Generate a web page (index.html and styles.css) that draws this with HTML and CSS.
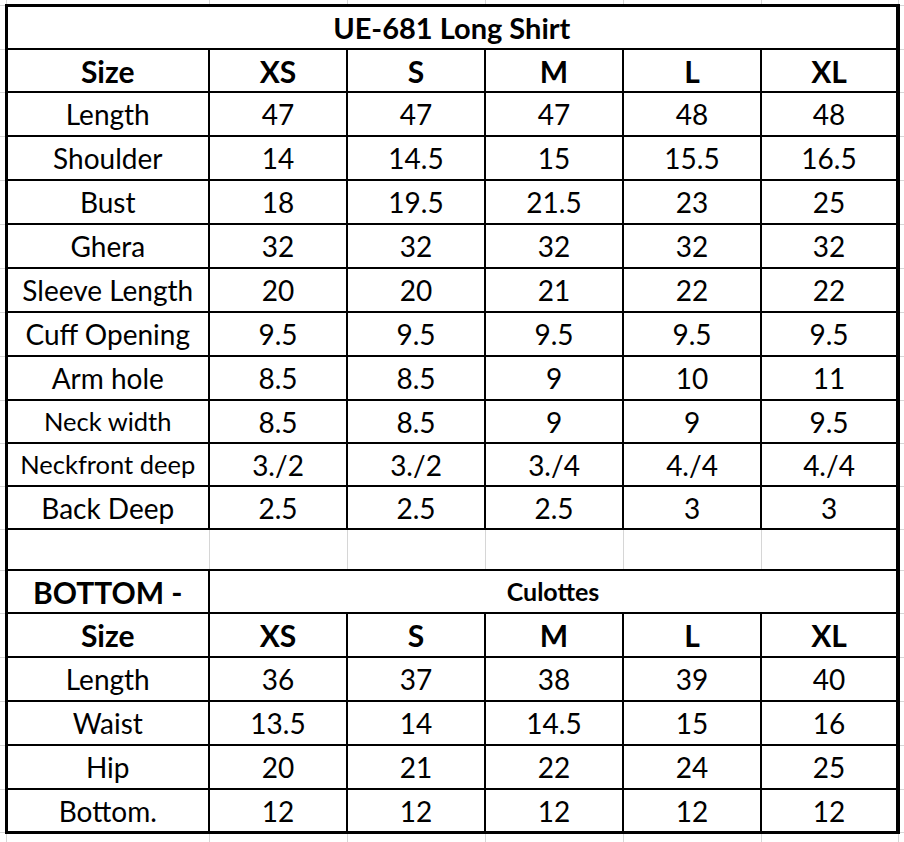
FILE: index.html
```html
<!DOCTYPE html>
<html lang="en">
<head>
<meta charset="utf-8">
<title>UE-681 Long Shirt – Size Chart</title>
<link rel="stylesheet" href="styles.css">
</head>
<body>
<table class="sheet">
  <colgroup>
    <col class="c-gut-l">
    <col class="c-label">
    <col class="c-val"><col class="c-val"><col class="c-val"><col class="c-val">
    <col class="c-val-last">
    <col class="c-gut-r">
  </colgroup>
  <tr class="gut-top">
    <td class="corner"></td><td></td><td></td><td></td><td></td><td></td><td></td><td class="corner"></td>
  </tr>
  <tr class="r-title">
    <td class="gl"></td><td class="title first last" colspan="6">UE-681 Long Shirt</td><td class="gr"></td>
  </tr>
  <tr class="r-43 head">
    <td class="gl"></td><td class="first">Size</td><td>XS</td><td>S</td><td>M</td><td>L</td><td class="last">XL</td><td class="gr"></td>
  </tr>
  <tr class="r-44">
    <td class="gl"></td><td class="first">Length</td><td>47</td><td>47</td><td>47</td><td>48</td><td class="last">48</td><td class="gr"></td>
  </tr>
  <tr class="r-44">
    <td class="gl"></td><td class="first">Shoulder</td><td>14</td><td>14.5</td><td>15</td><td>15.5</td><td class="last">16.5</td><td class="gr"></td>
  </tr>
  <tr class="r-44">
    <td class="gl"></td><td class="first">Bust</td><td>18</td><td>19.5</td><td>21.5</td><td>23</td><td class="last">25</td><td class="gr"></td>
  </tr>
  <tr class="r-44">
    <td class="gl"></td><td class="first">Ghera</td><td>32</td><td>32</td><td>32</td><td>32</td><td class="last">32</td><td class="gr"></td>
  </tr>
  <tr class="r-44">
    <td class="gl"></td><td class="first">Sleeve Length</td><td>20</td><td>20</td><td>21</td><td>22</td><td class="last">22</td><td class="gr"></td>
  </tr>
  <tr class="r-44">
    <td class="gl"></td><td class="first">Cuff Opening</td><td>9.5</td><td>9.5</td><td>9.5</td><td>9.5</td><td class="last">9.5</td><td class="gr"></td>
  </tr>
  <tr class="r-44">
    <td class="gl"></td><td class="first">Arm hole</td><td>8.5</td><td>8.5</td><td>9</td><td>10</td><td class="last">11</td><td class="gr"></td>
  </tr>
  <tr class="r-43">
    <td class="gl"></td><td class="first small">Neck width</td><td>8.5</td><td>8.5</td><td>9</td><td>9</td><td class="last">9.5</td><td class="gr"></td>
  </tr>
  <tr class="r-43">
    <td class="gl"></td><td class="first small">Neckfront deep</td><td>3./2</td><td>3./2</td><td>3./4</td><td>4./4</td><td class="last">4./4</td><td class="gr"></td>
  </tr>
  <tr class="r-43">
    <td class="gl"></td><td class="first">Back Deep</td><td>2.5</td><td>2.5</td><td>2.5</td><td>3</td><td class="last">3</td><td class="gr"></td>
  </tr>
  <tr class="r-blank blank">
    <td class="gl"></td><td class="first"></td><td></td><td></td><td></td><td></td><td class="last"></td><td class="gr"></td>
  </tr>
  <tr class="r-43 head">
    <td class="gl"></td><td class="first">BOTTOM -</td><td class="culottes last" colspan="5">Culottes</td><td class="gr"></td>
  </tr>
  <tr class="r-44 head">
    <td class="gl"></td><td class="first">Size</td><td>XS</td><td>S</td><td>M</td><td>L</td><td class="last">XL</td><td class="gr"></td>
  </tr>
  <tr class="r-44">
    <td class="gl"></td><td class="first">Length</td><td>36</td><td>37</td><td>38</td><td>39</td><td class="last">40</td><td class="gr"></td>
  </tr>
  <tr class="r-44">
    <td class="gl"></td><td class="first">Waist</td><td>13.5</td><td>14</td><td>14.5</td><td>15</td><td class="last">16</td><td class="gr"></td>
  </tr>
  <tr class="r-44">
    <td class="gl"></td><td class="first">Hip</td><td>20</td><td>21</td><td>22</td><td>24</td><td class="last">25</td><td class="gr"></td>
  </tr>
  <tr class="r-end">
    <td class="gl"></td><td class="first">Bottom.</td><td>12</td><td>12</td><td>12</td><td>12</td><td class="last">12</td><td class="gr"></td>
  </tr>
  <tr class="gut-bottom">
    <td class="corner"></td><td></td><td></td><td></td><td></td><td></td><td></td><td class="corner"></td>
  </tr>
</table>
</body>
</html>
```
FILE: styles.css
```css
html, body {
  margin: 0;
  padding: 0;
  background: #ffffff;
}

body {
  width: 904px;
  height: 842px;
  overflow: hidden;
  font-family: Lato, "Liberation Sans", sans-serif;
  color: #000;
}

.sheet {
  border-collapse: collapse;
  table-layout: fixed;
  width: 904px;
}

.c-gut-l { width: 6px; }
.c-label { width: 203px; }
.c-val { width: 138px; }
.c-val-last { width: 137px; }
.c-gut-r { width: 6px; }

.sheet td {
  padding: 0;
  border: 2px solid #000;
  text-align: center;
  vertical-align: middle;
  font-size: 28px;
  line-height: 1;
  white-space: nowrap;
  overflow: hidden;
}

/* gutters: spreadsheet grid outside the table */
.sheet .gut-top td,
.sheet .gut-bottom td {
  border: none;
  border-left: 1px solid #d6d6d6;
  border-right: 1px solid #d6d6d6;
}
.sheet .gut-top td { height: 4px; }
.sheet .gut-bottom td { height: 9px; }

.sheet td.gl,
.sheet td.gr {
  border: none;
  border-top: 1px solid #d6d6d6;
  border-bottom: 1px solid #d6d6d6;
}

.sheet td.corner { border: none; }

/* outer thick frame */
.sheet td.first { border-left: 3px solid #000; }
.sheet td.last { border-right: 4px solid #000; }
.sheet .r-title td.title { border-top: 3px solid #000; }
.sheet .r-end td:not(.gl):not(.gr) { border-bottom: 3px solid #000; }

/* row heights (content box; borders add ~2px) */
.r-title td { height: 41px; }
.r-43 td { height: 41px; }
.r-44 td { height: 42px; }
.r-blank td { height: 39px; }
.r-end td { height: 41px; }

/* text styles */
.sheet td.title {
  font-weight: 700;
  font-size: 29px;
}
.head td {
  font-weight: 700;
  font-size: 30px;
}
.sheet td.small { font-size: 25.5px; }
.sheet .head td.culottes {
  font-size: 25px;
}

/* empty separator row uses faint grid lines between columns */
.sheet .blank td {
  border-left: 1px solid #d6d6d6;
  border-right: 1px solid #d6d6d6;
}
.sheet .blank td.first { border-left: 3px solid #000; }
.sheet .blank td.last { border-right: 4px solid #000; }
.sheet .blank td.gl,
.sheet .blank td.gr {
  border-left: none;
  border-right: none;
}
```
